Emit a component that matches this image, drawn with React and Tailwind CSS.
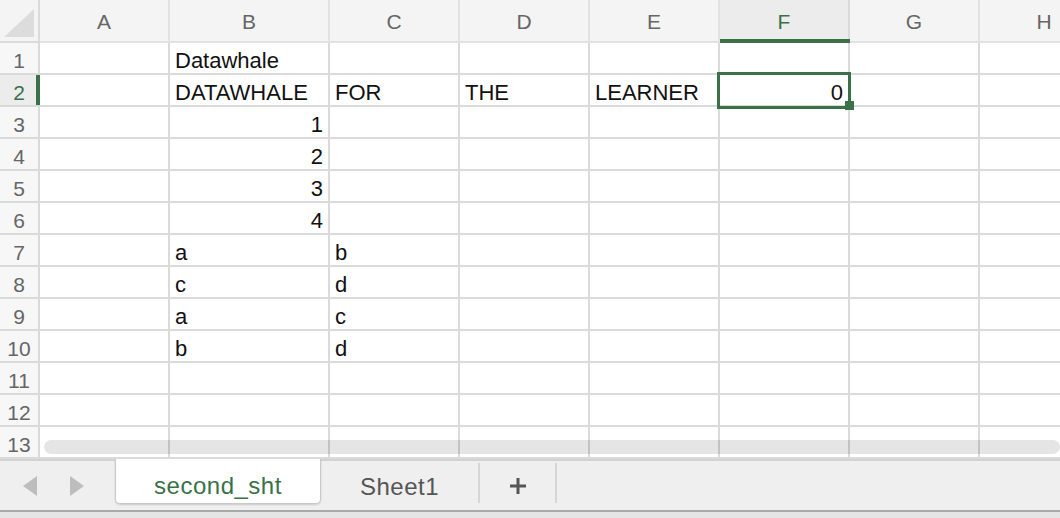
import React from 'react';

const GREEN = '#3a7148';
const cols = ['A', 'B', 'C', 'D', 'E', 'F', 'G', 'H'];

// cell contents: [row][col] -> { v, num }
const data = {
  1: { B: 'Datawhale' },
  2: { B: 'DATAWHALE', C: 'FOR', D: 'THE', E: 'LEARNER', F: 0 },
  3: { B: 1 },
  4: { B: 2 },
  5: { B: 3 },
  6: { B: 4 },
  7: { B: 'a', C: 'b' },
  8: { B: 'c', C: 'd' },
  9: { B: 'a', C: 'c' },
  10: { B: 'b', C: 'd' },
};

const rows = Array.from({ length: 13 }, (_, i) => i + 1);

const Cell = ({ value }) => {
  const isNum = typeof value === 'number';
  return (
    <div
      className={`h-[32px] border-r-2 border-b-2 border-[#dadada] bg-white flex items-center px-[5px] pt-[5px] text-[22px] text-[#111] whitespace-nowrap overflow-hidden ${
        isNum ? 'justify-end' : 'justify-start'
      }`}
    >
      {value !== undefined ? String(value) : ''}
    </div>
  );
};

export default function App() {
  return (
    <div
      className="w-[1060px] h-[518px] overflow-hidden bg-white flex flex-col"
      style={{ fontFamily: '"Liberation Sans", Arial, sans-serif' }}
    >
      {/* Grid */}
      <div className="relative overflow-hidden">
        <div className="grid grid-cols-[40px_130px_160px_130px_130px_130px_130px_130px_130px] w-[1170px]">
          {/* corner */}
          <div className="h-[43px] bg-[#f4f4f4] border-r-2 border-b-2 border-[#dadada] flex items-end justify-end pr-[4px] pb-[4px]">
            <svg width="30" height="28" viewBox="0 0 30 28">
              <polygon points="30,0 30,28 0,28" fill="#dcdcdc" />
            </svg>
          </div>
          {cols.map((c) =>
            c === 'F' ? (
              <div
                key={c}
                className="relative h-[43px] bg-[#ececec] border-r-2 border-b-2 border-[#dadada] flex items-center justify-center text-[21px] pt-[3px]"
                style={{ color: GREEN }}
              >
                F
                <div className="absolute left-0 right-[-2px] bottom-[-2px] h-[4px] bg-[#3a7148]" />
              </div>
            ) : (
              <div
                key={c}
                className="h-[43px] bg-[#f4f4f4] border-r-2 border-b-2 border-[#e2e2e2] flex items-center justify-center text-[21px] text-[#666] pt-[3px]"
              >
                {c}
              </div>
            )
          )}

          {rows.map((r) => (
            <React.Fragment key={r}>
              {r === 2 ? (
                <div className="relative h-[32px] bg-[#ececec] border-r-2 border-b-2 border-[#dadada] flex items-center justify-center pt-[5px] text-[21px] text-[#3a7148]">
                  2
                  <div className="absolute right-[-2px] top-0 bottom-0 w-[4px] bg-[#3a7148]" />
                </div>
              ) : (
                <div className="h-[32px] bg-[#f7f7f7] border-r-2 border-b-2 border-[#dadada] flex items-center justify-center pt-[5px] text-[21px] text-[#666]">
                  {r}
                </div>
              )}
              {cols.map((c) => (
                <Cell key={c} value={data[r]?.[c]} />
              ))}
            </React.Fragment>
          ))}
        </div>

        {/* selected cell F2 */}
        <div className="absolute left-[717px] top-[72px] w-[134px] h-[37px] border-[3px] border-[#3a7148]" />
        <div className="absolute left-[845px] top-[101px] w-[9px] h-[9px] bg-[#3a7148]" />

        {/* horizontal scrollbar */}
        <div className="absolute left-[44px] right-0 top-[440px] h-[14px] rounded-full bg-black/10" />
      </div>

      {/* Sheet tabs */}
      <div className="border-t-2 border-[#d2d2d2] h-[53px] bg-[#efefef] border-b-2 border-b-[#a9a9a9] flex items-start shrink-0">
        <div className="flex items-center h-full pl-[23px] gap-[33px]">
          <svg width="14" height="20" viewBox="0 0 14 20">
            <polygon points="14,0 14,20 0,10" fill="#bdbdbd" />
          </svg>
          <svg width="14" height="20" viewBox="0 0 14 20">
            <polygon points="0,0 0,20 14,10" fill="#bdbdbd" />
          </svg>
        </div>
        <div
          className="ml-[31px] -mt-[2px] w-[206px] h-[45px] pt-[10px] bg-white border-x border-b border-[#c9c9c9] rounded-b-[5px] shadow-[0_1px_2px_rgba(0,0,0,0.15)] flex items-center justify-center text-[24px] tracking-[0.5px]"
          style={{ color: GREEN }}
        >
          second_sht
        </div>
        <div className="w-[157px] h-full pt-[2px] flex items-center justify-center text-[24px] text-[#555] tracking-[0.5px]">
          Sheet1
        </div>
        <div className="w-[2px] h-[40px] mt-[2px] bg-[#d6d6d6]" />
        <div className="w-[75px] h-full flex items-center justify-center">
          <svg width="18" height="18" viewBox="0 0 18 18">
            <path d="M9 1v16M1 9h16" stroke="#555" strokeWidth="3" />
          </svg>
        </div>
        <div className="w-[2px] h-[40px] mt-[2px] bg-[#d6d6d6]" />
      </div>
      <div className="flex-1 bg-[#e5e5e5]" />
    </div>
  );
}
